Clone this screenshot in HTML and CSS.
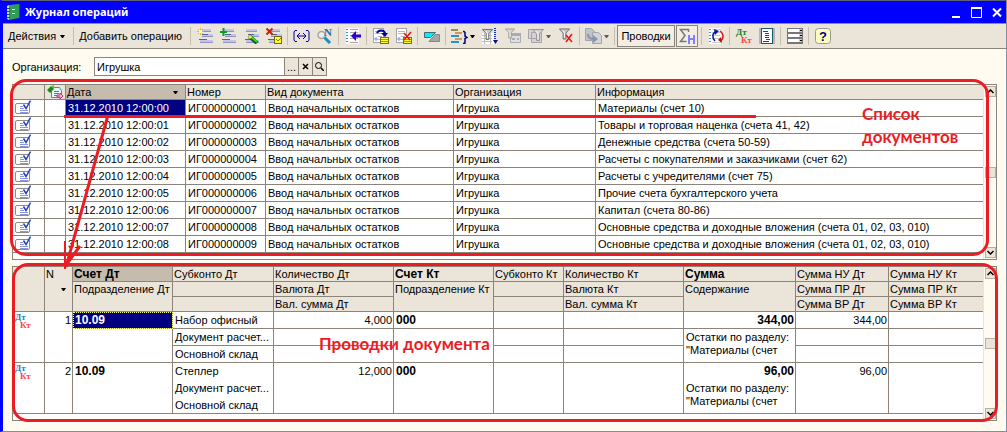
FILE: index.html
```
<!DOCTYPE html>
<html lang="ru">
<head>
    <meta charset="UTF-8">
    <meta name="viewport" content="width=device-width, initial-scale=1.0">
    <title>Журнал операций</title>
    <link rel="stylesheet" href="styles.css">
</head>
<body>

<!-- shared icons -->
<svg class="sprite" aria-hidden="true">
    <symbol id="i-doc" viewBox="0 0 16 14">
        <rect x="0.5" y="3.5" width="14" height="10" rx="1.5" fill="#fff" stroke="#8c8c8c"/>
        <path d="M5 6.500h3M5 8.500h4M5 10.500h8M5 12.500h8" stroke="#8d96d8"/>
        <path d="M8.500 4.500l2.500 4L15.500 0.500" fill="none" stroke="#2340c0" stroke-width="1.500"/>
    </symbol>
    <symbol id="i-list" viewBox="0 0 16 16">
        <path d="M3 1h11v3H3zM5 6h11v3H5zM3 12h13v3H3z" fill="#c3c3ea"/>
        <path d="M3 3.500h11M5 8.500h11M3 14.500h13" stroke="#9292c4"/>
        <path d="M2 11.500h8M5 6.500h6" stroke="#486a94"/>
    </symbol>
    <symbol id="i-page" viewBox="0 0 16 16">
        <rect x="0.5" y="0.5" width="10" height="14" fill="#fff" stroke="#a5a5a5"/>
        <path d="M2 3.500h7M2 5.500h7M5 8.500h4M5 11.500h4" stroke="#b5b5cf"/>
        <path d="M3 9v4M1 11h4" stroke="#8a8aef"/>
    </symbol>
    <symbol id="i-note" viewBox="0 0 9 7">
        <rect x="0.5" y="0.5" width="8" height="6" fill="#ffff2a" stroke="#77700f"/>
        <path d="M1 2.500h7M1 4.500h7" stroke="#a59a18"/>
    </symbol>
    <symbol id="i-funnel" viewBox="0 0 12 12">
        <path d="M0.500 0.500h11L7.500 5v6.500h-3V5z" fill="#c9c9c9" stroke="#666"/>
        <path d="M4 2l2 3v5" fill="none" stroke="#fff"/>
    </symbol>
    <symbol id="i-dtkt" viewBox="0 0 17 16">
        <text class="glyph-serif" x="1" y="7">Дт</text>
        <text class="glyph-serif glyph-red" x="6" y="15">Кт</text>
    </symbol>
    <symbol id="i-arrow" viewBox="0 0 5 3"><path d="M0 0h5L3 3H2z"/></symbol>
    <symbol id="i-up" viewBox="0 0 7 5"><path d="M0.500 4L3.500 1l3 3" fill="none" stroke="#000" stroke-width="1.500"/></symbol>
    <symbol id="i-down" viewBox="0 0 7 5"><path d="M0.500 1l3 3 3-3" fill="none" stroke="#000" stroke-width="1.500"/></symbol>
</svg>

<div class="window">
    <header class="titlebar">
        <svg class="app-icon" width="13" height="16" viewBox="0 0 13 16">
            <path d="M2 1l10-1v14l-10 2z" fill="#2f9c57"/>
            <path d="M0 2l2-1v15l-2-1z" fill="#bfe5c5"/>
            <path d="M12 0h1v14h-1z" fill="#0d5c2a"/>
            <path d="M5 5.500h3M5 9.500h3" stroke="#eaffea"/>
            <path d="M0 4.500h3M0 7.500h3M0 10.500h3M0 13.500h3" stroke="#37483c"/>
        </svg>
        <h1>Журнал операций</h1>
        <div class="window-buttons">
            <button aria-label="Свернуть"><svg width="10" height="11"><path d="M1 10h8" stroke="#fff" stroke-width="2"/></svg></button>
            <button aria-label="Развернуть"><svg width="11" height="11"><path d="M0.500 1v9.500h10V1" fill="none" stroke="#fff"/><path d="M0 1h11" stroke="#fff" stroke-width="2"/></svg></button>
            <button aria-label="Закрыть"><svg width="10" height="11"><path d="M1 1.500l8 8M9 1.500l-8 8" stroke="#fff" stroke-width="2"/></svg></button>
        </div>
    </header>

    <nav class="toolbar">
        <button class="menu">Действия <svg width="5" height="3"><use href="#i-arrow"/></svg></button>
        <span class="sep"></span>
        <button class="text-btn">Добавить операцию</button>
        <span class="sep"></span>
        <button class="tool" aria-label="Добавить"><svg width="16" height="16">
            <use href="#i-list"/>
            <path d="M3.500 0v7M0 3.500h7M1 1l5 5M6 1L1 6" stroke="#f5b800"/><path d="M2 2h3v3H2z" fill="#fff9a0"/>
        </svg></button>
        <button class="tool" aria-label="Скопировать"><svg width="16" height="16">
            <use href="#i-list"/>
            <path d="M3.500 0v8M0 4h7" stroke="#0b9b27" stroke-width="2"/>
        </svg></button>
        <button class="tool" aria-label="Изменить"><svg width="16" height="16">
            <use href="#i-list"/>
            <path d="M6 8l8 7" stroke="#185518" stroke-width="4"/><path d="M7 8l7 6" stroke="#29d52b" stroke-width="2"/><path d="M6 8l2 2" stroke="#ffed35" stroke-width="3"/>
        </svg></button>
        <button class="tool" aria-label="Пометить на удаление"><svg width="16" height="16">
            <use href="#i-list"/>
            <path d="M0.500 0.500l6 6M6.500 0.500l-6 6" stroke="#d51c04" stroke-width="2"/>
            <rect x="8.500" y="8.500" width="7" height="7" fill="#ffff25" stroke="#70680c"/><path d="M10 11l2 2 3-3" fill="none" stroke="#777007"/>
        </svg></button>
        <span class="sep"></span>
        <button class="tool" aria-label="Интервал"><svg width="17" height="16">
            <path d="M4 2.500H2L1 4v8l1 1.500h2M13 2.500h2L16 4v8l-1 1.500h-2" fill="none" stroke="#00009d"/>
            <path d="M4 8h9M7 5L4 8l3 3M10 5l3 3-3 3" fill="none" stroke="#00009d"/>
        </svg></button>
        <button class="tool" aria-label="Найти по номеру"><svg width="16" height="16">
            <path d="M7 9l6 6" stroke="#168fc3" stroke-width="3"/>
            <circle cx="4.500" cy="7" r="3.500" fill="#eee" stroke="#a4a4a4" stroke-width="1.500"/>
            <text class="glyph-n" x="7" y="8">N</text>
        </svg></button>
        <span class="sep"></span>
        <button class="tool" aria-label="Выбрать"><svg width="16" height="16">
            <path d="M1 0h13v16H1z" fill="#fff"/>
            <path d="M5 1.500h8M5 4.500h8M5 7.500h8M5 10.500h8M5 14.500h8" stroke="#a8a8a8"/>
            <path d="M2 1v15" stroke="#24a0d0" stroke-width="2" stroke-dasharray="1 2"/>
            <path d="M10 8h6" stroke="#3000c0" stroke-width="3"/><path d="M11 3v10L6 8z" fill="#3000c0"/>
        </svg></button>
        <span class="sep"></span>
        <button class="tool" aria-label="Провести"><svg width="16" height="16">
            <use href="#i-page"/>
            <path d="M4 5c2-4 8-3 8 1" fill="none" stroke="#00009c" stroke-width="2"/><path d="M8 5h7l-3 4z" fill="#00009c"/>
            <svg x="7" y="9" width="9" height="7"><use href="#i-note"/></svg>
        </svg></button>
        <button class="tool" aria-label="Отмена проведения"><svg width="16" height="16">
            <use href="#i-page"/>
            <svg x="7" y="9" width="9" height="7"><use href="#i-note"/></svg>
            <path d="M8 5l6 7M15 4l-7 8" stroke="#f01010" stroke-width="1.500"/>
        </svg></button>
        <span class="sep"></span>
        <button class="tool" aria-label="Сторно"><svg width="16" height="16">
            <path d="M11 6.500h4.500v7H5z" fill="#a5a5a5" stroke="#888"/>
            <path d="M0.500 4.500h11l-5 5h-6z" fill="#00eeff" stroke="#426c72"/>
        </svg></button>
        <span class="sep"></span>
        <button class="tool drop" aria-label="Структура подчиненности"><svg width="17" height="16">
            <path d="M0 2h7" stroke="#8e8c58" stroke-width="2"/><path d="M4 5h7M4 11h7" stroke="#d6965a" stroke-width="2"/>
            <path d="M0 8h8M0 14h8" stroke="#2795c6" stroke-width="2"/>
            <path d="M12 3.500h1l1 1V8l2 1.500-2 1V15l-1 .5h-1" fill="none" stroke="#000078" stroke-width="1.500"/>
        </svg><svg width="5" height="3"><use href="#i-arrow"/></svg></button>
        <button class="tool" aria-label="Отбор и сортировка"><svg width="16" height="16">
            <path d="M0 5h12v11H0z" fill="#fff"/><path d="M0 7.500h10M0 10.500h10M0 13.500h10M2.500 5v11M8.500 5v11" stroke="#bbb"/>
            <svg width="11" height="13"><use href="#i-funnel"/></svg>
            <path d="M13 0v12" stroke="#1734b5" stroke-width="2" stroke-dasharray="1 1"/><path d="M11 12h5l-2.500 4z" fill="#10108d"/>
        </svg></button>
        <button class="tool off" disabled aria-label="Отбор по значению"><svg width="16" height="16">
            <path d="M5.500 5.500h10v9h-10z" fill="#ddd" stroke="#7e86a0"/><path d="M5 5h11v3H5z" fill="#7e86a0"/><path d="M7 10h3v2H7zM12 10h2v2h-2z" fill="#7e86a0"/>
            <svg width="10" height="11"><use href="#i-funnel"/></svg>
        </svg></button>
        <button class="tool drop off" disabled aria-label="История отборов"><svg width="16" height="16">
            <path d="M0.500 1.500h9v9h-9zM3.500 4.500h10v10h-10z" fill="#c5c8d0" stroke="#767c92"/>
            <svg x="4" y="1" width="12" height="12"><use href="#i-funnel"/></svg>
        </svg><svg width="5" height="3"><use href="#i-arrow"/></svg></button>
        <button class="tool" aria-label="Отключить отбор"><svg width="14" height="16">
            <svg width="11" height="12"><use href="#i-funnel"/></svg>
            <path d="M7 7l6 7M13 6l-6 8" stroke="#f01010" stroke-width="1.500"/>
        </svg></button>
        <span class="sep"></span>
        <button class="tool drop off" disabled aria-label="Ввести на основании"><svg width="17" height="16">
            <path d="M0.500 0.500h6l3 3v9h-9z" fill="#9fb2c2" stroke="#6b7f8e"/><path d="M7.500 4.500h6l3 3v8h-9z" fill="#c5cbd8" stroke="#6b7f8e"/>
            <path d="M3 6c0 4 3 5 6 5" fill="none" stroke="#4d5e88" stroke-width="2"/><path d="M8 7l5 4-5 4z" fill="#4d5e88"/>
        </svg><svg width="5" height="3"><use href="#i-arrow"/></svg></button>
        <span class="sep"></span>
        <button class="toggle">Проводки</button>
        <button class="toggle sigma" aria-label="Итоги НУ"><svg width="17" height="16">
            <path d="M9.500 4V1.500H1.500L6 7.500l-4.500 6h6" fill="none" stroke="#777" stroke-width="1.500"/>
            <path d="M10 7v9M15 7v9M10 11h5" stroke="#8080ff" stroke-width="2"/>
        </svg></button>
        <span class="sep"></span>
        <button class="tool" aria-label="Обновить"><svg width="16" height="16">
            <path d="M1 0h12v16H1z" fill="#fff"/><path d="M2 1v15" stroke="#24a0d0" stroke-width="2" stroke-dasharray="1 2"/>
            <path d="M4 1.500h9M4 4.500h8M4 7.500h8M4 10.500h8M4 14.500h9" stroke="#ccc"/>
            <path d="M7 13C4 10 4 5 8 4" fill="none" stroke="#1212a5" stroke-width="1.500"/><path d="M6 1l5 2-4 4z" fill="#1212a5"/>
            <path d="M12 3c4 3 4 8 0 10" fill="none" stroke="#d81818" stroke-width="1.500"/><path d="M14 15l-4-3 3-3z" fill="#b91212"/>
        </svg></button>
        <span class="sep"></span>
        <button class="tool green" aria-label="Дт Кт"><svg width="17" height="16"><use href="#i-dtkt"/></svg></button>
        <button class="tool" aria-label="Отчет"><svg width="16" height="16">
            <path d="M0 0h16v16H0z" fill="#b5b5b5"/><rect x="2.500" y="0.500" width="11" height="15" fill="#fff" stroke="#1c586d"/>
            <path d="M4 3.500h5M6 5.500h4M6 7.500h4M6 9.500h4M7 11.500h4M4 13.500h6" stroke="#155468"/>
        </svg></button>
        <span class="sep"></span>
        <button class="tool" aria-label="Настройка списка"><svg width="16" height="16">
            <path d="M0 0h16v16H0z" fill="#777"/><path d="M1 1h11v3H1zM1 6h11v3H1zM1 11h11v3H1z" fill="#fff"/>
            <path d="M12 1h3v3h-3zM12 6h3v3h-3zM12 11h3v3h-3z" fill="#ccc"/><path d="M13 2h2v1h-2zM13 7h2v1h-2zM13 12h2v1h-2z"/>
        </svg></button>
        <span class="sep"></span>
        <button class="tool" aria-label="Справка"><svg width="16" height="16">
            <rect x="0.500" y="0.500" width="15" height="15" rx="3" fill="#ffffbd" stroke="#999"/>
            <text class="glyph-help" x="4" y="13">?</text>
        </svg></button>
    </nav>

    <main>
        <div class="filter">
            <label for="org">Организация:</label>
            <div class="field">
                <input type="text" id="org" value="Игрушка">
                <button aria-label="Выбрать организацию">...</button>
                <button aria-label="Очистить"><svg width="7" height="7"><path d="M1 1l5 5M6 1L1 6" stroke="#000" stroke-width="1.500"/></svg></button>
                <button aria-label="Открыть"><svg width="9" height="9"><circle cx="3.500" cy="3.500" r="3" fill="none" stroke="#000"/><path d="M6 6l3 3" stroke="#000" stroke-width="1.500"/></svg></button>
            </div>
        </div>

        <section class="panel docs">
            <div class="grid">
                <table>
                    <colgroup><col class="c-icon"><col class="c-flag"><col class="c-date"><col class="c-num"><col class="c-kind"><col class="c-org"><col></colgroup>
                    <thead>
                    <tr>
                        <th></th>
                        <th class="flag"><svg width="16" height="14" viewBox="0 0 16 14">
                            <path d="M4.500 2.500h8l2 3v7h-10z" fill="#e9fbff" stroke="#1e9fbd"/><path d="M7 6.500h5M7 8.500h5M7 10.500h5" stroke="#278eb0"/>
                            <path d="M0 5l4-4 3 3-4 4z" fill="#1b8b19"/><path d="M4 1l3-1v4z" fill="#5cd42c"/><path d="M10 10h3V8l3 3-3 3v-2h-3z" fill="#ffb4d8" stroke="#c2307c"/>
                        </svg></th>
                        <th class="sorted"><div class="sort">Дата <svg width="5" height="3"><use href="#i-arrow"/></svg></div></th>
                        <th>Номер</th><th>Вид документа</th><th>Организация</th><th>Информация</th>
                    </tr>
                    </thead>
                    <tbody>
                    <tr><td><svg width="16" height="14"><use href="#i-doc"/></svg></td><td></td><td class="selected">31.12.2010 12:00:00</td><td>ИГ000000001</td><td>Ввод начальных остатков</td><td>Игрушка</td><td>Материалы (счет 10)</td></tr>
                    <tr><td><svg width="16" height="14"><use href="#i-doc"/></svg></td><td></td><td>31.12.2010 12:00:01</td><td>ИГ000000002</td><td>Ввод начальных остатков</td><td>Игрушка</td><td>Товары и торговая наценка (счета 41, 42)</td></tr>
                    <tr><td><svg width="16" height="14"><use href="#i-doc"/></svg></td><td></td><td>31.12.2010 12:00:02</td><td>ИГ000000003</td><td>Ввод начальных остатков</td><td>Игрушка</td><td>Денежные средства (счета 50-59)</td></tr>
                    <tr><td><svg width="16" height="14"><use href="#i-doc"/></svg></td><td></td><td>31.12.2010 12:00:03</td><td>ИГ000000004</td><td>Ввод начальных остатков</td><td>Игрушка</td><td>Расчеты с покупателями и заказчиками (счет 62)</td></tr>
                    <tr><td><svg width="16" height="14"><use href="#i-doc"/></svg></td><td></td><td>31.12.2010 12:00:04</td><td>ИГ000000005</td><td>Ввод начальных остатков</td><td>Игрушка</td><td>Расчеты с учредителями (счет 75)</td></tr>
                    <tr><td><svg width="16" height="14"><use href="#i-doc"/></svg></td><td></td><td>31.12.2010 12:00:05</td><td>ИГ000000006</td><td>Ввод начальных остатков</td><td>Игрушка</td><td>Прочие счета бухгалтерского учета</td></tr>
                    <tr><td><svg width="16" height="14"><use href="#i-doc"/></svg></td><td></td><td>31.12.2010 12:00:06</td><td>ИГ000000007</td><td>Ввод начальных остатков</td><td>Игрушка</td><td>Капитал (счета 80-86)</td></tr>
                    <tr><td><svg width="16" height="14"><use href="#i-doc"/></svg></td><td></td><td>31.12.2010 12:00:07</td><td>ИГ000000008</td><td>Ввод начальных остатков</td><td>Игрушка</td><td>Основные средства и доходные вложения (счета 01, 02, 03, 010)</td></tr>
                    <tr><td><svg width="16" height="14"><use href="#i-doc"/></svg></td><td></td><td>31.12.2010 12:00:08</td><td>ИГ000000009</td><td>Ввод начальных остатков</td><td>Игрушка</td><td>Основные средства и доходные вложения (счета 01, 02, 03, 010)</td></tr>
                    </tbody>
                </table>
            </div>
            <div class="scroll">
                <button aria-label="Вверх"><svg width="7" height="5"><use href="#i-up"/></svg></button>
                <span class="thumb"></span>
                <button aria-label="Вниз"><svg width="7" height="5"><use href="#i-down"/></svg></button>
            </div>
            <div class="outline"></div>
            <svg class="pointer" width="700" height="160">
                <path d="M0 4.500h692M44 3L2 155M0.500 129v28M16 134L2 153" fill="none" stroke="#ed1c24" stroke-width="3"/>
            </svg>
            <p class="note">Список<br>документов</p>
        </section>

        <section class="panel entries">
            <div class="grid">
                <table>
                    <colgroup><col class="c-icon"><col class="c-n"><col class="c-acc"><col class="c-sub"><col class="c-qty"><col class="c-acc"><col class="c-sub-kt"><col class="c-qty"><col class="c-sum"><col class="c-tax"><col></colgroup>
                    <thead>
                    <tr>
                        <th rowspan="3"></th>
                        <th rowspan="3" class="n">N<svg width="5" height="3"><use href="#i-arrow"/></svg></th>
                        <th class="sorted strong">Счет Дт</th><th>Субконто Дт</th><th>Количество Дт</th><th class="strong">Счет Кт</th><th>Субконто Кт</th><th>Количество Кт</th><th class="strong">Сумма</th><th>Сумма НУ Дт</th><th>Сумма НУ Кт</th>
                    </tr>
                    <tr><th rowspan="2">Подразделение Дт</th><th></th><th>Валюта Дт</th><th rowspan="2">Подразделение Кт</th><th></th><th>Валюта Кт</th><th rowspan="2">Содержание</th><th>Сумма ПР Дт</th><th>Сумма ПР Кт</th></tr>
                    <tr><th></th><th>Вал. сумма Дт</th><th></th><th>Вал. сумма Кт</th><th>Сумма ВР Дт</th><th>Сумма ВР Кт</th></tr>
                    </thead>
                    <tbody>
                    <tr>
                        <td rowspan="3" class="dtkt"><svg width="17" height="16"><use href="#i-dtkt"/></svg></td><td rowspan="3" class="right">1</td>
                        <td class="selected strong focus">10.09</td><td>Набор офисный</td><td class="right">4,000</td><td class="strong">000</td><td></td><td></td><td class="right strong">344,00</td><td class="right">344,00</td><td></td>
                    </tr>
                    <tr><td rowspan="2"></td><td>Документ расчет...</td><td></td><td rowspan="2"></td><td></td><td></td><td rowspan="2" class="content">Остатки по разделу: "Материалы (счет</td><td></td><td></td></tr>
                    <tr><td>Основной склад</td><td></td><td></td><td></td><td></td><td></td></tr>
                    </tbody>
                    <tbody class="plain">
                    <tr>
                        <td rowspan="3" class="dtkt"><svg width="17" height="16"><use href="#i-dtkt"/></svg></td><td rowspan="3" class="right">2</td>
                        <td class="strong">10.09</td><td>Степлер</td><td class="right">12,000</td><td class="strong">000</td><td></td><td></td><td class="right strong">96,00</td><td class="right">96,00</td><td></td>
                    </tr>
                    <tr><td rowspan="2"></td><td>Документ расчет...</td><td></td><td rowspan="2"></td><td></td><td></td><td rowspan="2" class="content">Остатки по разделу: "Материалы (счет</td><td></td><td></td></tr>
                    <tr><td>Основной склад</td><td></td><td></td><td></td><td></td><td></td></tr>
                    </tbody>
                </table>
            </div>
            <div class="scroll">
                <button aria-label="Вверх"><svg width="7" height="5"><use href="#i-up"/></svg></button>
                <span class="thumb"></span>
                <button aria-label="Вниз"><svg width="7" height="5"><use href="#i-down"/></svg></button>
            </div>
            <div class="outline"></div>
            <p class="note">Проводки документа</p>
        </section>
    </main>
</div>

</body>
</html>
```
FILE: styles.css
```
* { box-sizing: border-box; }
body { margin: 0; font-family: "Liberation Sans", Arial, sans-serif; font-size: 11px; color: #000; background: #fffbf0; }
button { padding: 0; border: none; background: none; font: inherit; color: inherit; }
svg { display: block; flex: none; }
.sprite { display: none; }

.window {
    min-height: 100vh;
    border-top: 1px solid #5f5f70;
    border-left: 3px solid #0000ff;
    border-right: 1px solid #8090a0;
    border-bottom: 1px solid #8090a0;
}

/* title */
.titlebar {
    display: flex;
    align-items: center;
    height: 23px;
    padding: 0 4px;
    gap: 5px;
    background: #0000ff;
    color: #fff;
    border-bottom: 1px solid #8090b0;
}
.titlebar h1 { margin: 0; flex: 1; font: bold 11px/16px "Noto Sans", sans-serif; }
.window-buttons { display: flex; gap: 10px; }

/* toolbar */
.toolbar {
    display: flex;
    align-items: center;
    height: 25px;
    background: #ebe4d9;
    border-bottom: 1px solid #8c8478;
}
.sep { width: 1px; height: 18px; margin: 0 2px; background: #c5bfb2; }
.menu { display: flex; align-items: center; gap: 4px; padding: 0 6px 0 5px; }
.text-btn { padding: 0 6px 0 3px; }
.tool { display: flex; align-items: center; justify-content: center; width: 23px; height: 22px; }
.drop { width: 30px; gap: 2px; }
.off { opacity: 0.6; }
.toggle {
    display: flex;
    align-items: center;
    justify-content: center;
    width: 58px;
    height: 22px;
    margin-right: 1px;
    border: 1px solid #8c8478;
    background: #f3eee5;
}
.sigma { width: 22px; }
.glyph-serif { font: bold 9px "Liberation Serif", serif; fill: currentColor; }
.green { color: #188018; }
.glyph-red { fill: #ff4545; }
.glyph-n { font: bold 11px "Liberation Serif", serif; fill: #2868ad; }
.glyph-help { font: bold 13px "Liberation Sans", sans-serif; fill: #00008b; }

main { padding: 8px 9px 9px; }

/* filter */
.filter { display: flex; align-items: center; height: 19px; margin-bottom: 8px; }
.filter label { width: 82px; }
.field { display: flex; width: 233px; height: 19px; border: 1px solid #8c8478; background: #fff; }
.field input { flex: 1; min-width: 0; border: none; padding: 0 2px; font: inherit; background: none; outline: none; }
.field button {
    display: flex;
    align-items: center;
    justify-content: center;
    width: 14px;
    border-left: 1px solid #8c8478;
    background: #ebe4d9;
}

/* tables */
.panel { position: relative; display: flex; border: 1px solid #8c8478; background: #fff; }
.docs { margin-bottom: 6px; }
.grid { flex: 1; min-width: 0; padding-bottom: 6px; }
table { width: 100%; table-layout: fixed; border-collapse: separate; border-spacing: 0; }
th, td {
    padding: 0 2px;
    border-right: 1px solid #8c8478;
    border-bottom: 1px solid #8c8478;
    text-align: left;
    vertical-align: top;
    white-space: nowrap;
    overflow: hidden;
}
th { height: 15px; padding: 0 1px; font-weight: normal; line-height: 14px; background: #ebe4d9; }
td { height: 17px; line-height: 16px; }
tr > :last-child { border-right: none; }
.sorted { background: #c5bcae; }
.sort { display: flex; align-items: center; justify-content: space-between; padding-right: 6px; }
.selected { background: #000080; color: #fff; }
.focus { outline: 1px dotted #ffff80; outline-offset: -1px; }
.strong { font-weight: bold; font-size: 12px; }
.right { text-align: right; padding-right: 1px; }
.flag { padding: 0 2px; }
.n svg { margin: 7px 0 0 15px; }
.dtkt { padding: 1px; color: #1585c8; }
.content { white-space: normal; line-height: 13px; padding-top: 2px; }
.plain td { border-bottom: none; }
.plain td[rowspan], .plain tr:last-child td { border-bottom: 1px solid #8c8478; }

.c-icon { width: 32px; }
.c-flag { width: 21px; }
.c-date { width: 120px; }
.c-num { width: 80px; }
.c-kind { width: 188px; }
.c-org { width: 142px; }
.c-n { width: 28px; }
.c-acc { width: 100px; }
.c-sub { width: 101px; }
.c-qty { width: 120px; }
.c-sub-kt { width: 70px; }
.c-sum { width: 112px; }
.c-tax { width: 93px; }

/* scrollbars */
.scroll {
    display: flex;
    flex-direction: column;
    align-items: center;
    justify-content: space-between;
    width: 13px;
    padding: 1px 0;
    border-left: 1px solid #ebe4d9;
    background: #fffbf0;
}
.scroll button, .thumb {
    display: flex;
    align-items: center;
    justify-content: center;
    width: 11px;
    height: 11px;
    border: 1px solid #b8b0a2;
    background: #ebe4d9;
}

/* red marks over the tables */
.outline { position: absolute; border: 3px solid #ed1c24; border-radius: 16px; pointer-events: none; }
.docs .outline { top: -6px; right: 7px; bottom: 3px; left: -3px; }
.entries .outline { top: -4px; right: -2px; bottom: -2px; left: -1px; }
.pointer { position: absolute; top: 27px; left: 51px; pointer-events: none; z-index: 1; }
.note { position: absolute; margin: 0; font: bold 17px/23px Lato, sans-serif; color: #ed1c24; }
.docs .note { top: 17px; left: 849px; }
.entries .note { top: 65px; left: 306px; }
```
